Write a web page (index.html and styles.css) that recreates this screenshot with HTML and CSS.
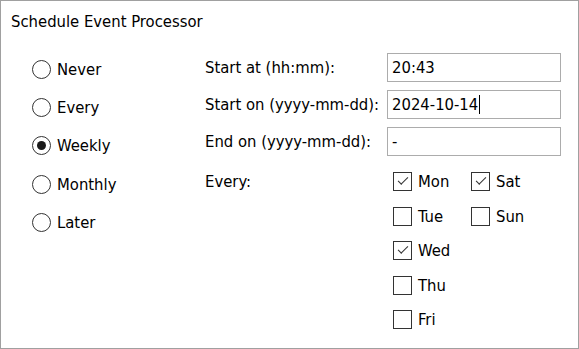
FILE: index.html
```html
<!DOCTYPE html>
<html lang="en">
<head>
  <meta charset="UTF-8">
  <meta name="viewport" content="width=device-width, initial-scale=1.0">
  <title>Schedule Event Processor</title>
  <link rel="stylesheet" href="styles.css">
</head>
<body>

  <div class="window">
    <div class="title">Schedule Event Processor</div>

    <div class="content">
      <!-- Modos de agendamento -->
      <div class="modes">
        <label class="radio"><span class="dot"></span>Never</label>
        <label class="radio"><span class="dot"></span>Every</label>
        <label class="radio selected"><span class="dot"></span>Weekly</label>
        <label class="radio"><span class="dot"></span>Monthly</label>
        <label class="radio"><span class="dot"></span>Later</label>
      </div>

      <!-- Configurações -->
      <div class="settings">
        <div class="label">Start at (hh:mm):</div>
        <div class="field">20:43</div>

        <div class="label">Start on (yyyy-mm-dd):</div>
        <div class="field">2024-10-14<span class="caret"></span></div>

        <div class="label">End on (yyyy-mm-dd):</div>
        <div class="field">-</div>

        <div class="label every">Every:</div>
        <div class="days">
          <label class="check checked"><span class="box"></span>Mon</label>
          <label class="check"><span class="box"></span>Tue</label>
          <label class="check checked"><span class="box"></span>Wed</label>
          <label class="check"><span class="box"></span>Thu</label>
          <label class="check"><span class="box"></span>Fri</label>
          <label class="check checked"><span class="box"></span>Sat</label>
          <label class="check"><span class="box"></span>Sun</label>
        </div>
      </div>
    </div>
  </div>

</body>
</html>
```

FILE: styles.css
```css
/* Estilos gerais */
body {
  margin: 0;
  padding: 0;
  background: #fff;
  font-family: "DejaVu Sans Condensed", "DejaVu Sans", sans-serif;
  font-stretch: condensed;
  font-size: 16.5px;
  color: #000;
}

.window {
  width: 579px;
  height: 349px;
  box-sizing: border-box;
  border: 1px solid #a0a0a0;
  background: #fff;
}

.title {
  padding: 11px 0 18px 10px;
  line-height: 20px;
}

.content {
  display: flex;
  padding-left: 31px;
}

/* Coluna dos radios */
.modes {
  width: 173px;
  display: flex;
  flex-direction: column;
}

.radio {
  height: 38.3px;
  display: flex;
  align-items: center;
  gap: 6px;
}

.dot {
  width: 19px;
  height: 19px;
  box-sizing: border-box;
  border: 1px solid #333;
  border-radius: 50%;
  display: flex;
  align-items: center;
  justify-content: center;
}

.selected .dot::after {
  content: "";
  width: 9px;
  height: 9px;
  border-radius: 50%;
  background: #1a1a1a;
}

/* Grade de configurações */
.settings {
  padding-top: 3px;
  display: grid;
  grid-template-columns: 182px 174px;
  grid-auto-rows: auto;
  row-gap: 8px;
}

.label {
  align-self: center;
  line-height: 20px;
}

.field {
  height: 29px;
  box-sizing: border-box;
  border: 1px solid #acacac;
  padding-left: 4px;
  display: flex;
  align-items: center;
}

.caret {
  width: 1px;
  height: 19px;
  background: #000;
  margin-left: 1px;
}

.every {
  align-self: start;
  margin-top: 8px;
  line-height: 19px;
}

/* Dias da semana */
.days {
  margin-top: 8px;
  padding-left: 6px;
  display: grid;
  grid-template-columns: 78px 78px;
  grid-template-rows: repeat(5, 19px);
  grid-auto-flow: column;
  row-gap: 15.5px;
}

.check {
  display: flex;
  align-items: center;
  gap: 6px;
  line-height: 19px;
}

.box {
  width: 19px;
  height: 19px;
  box-sizing: border-box;
  border: 1px solid #333;
  position: relative;
}

.checked .box::after {
  content: "";
  position: absolute;
  left: 4px;
  top: 4px;
  width: 9px;
  height: 4px;
  border-left: 1.5px solid #333;
  border-bottom: 1.5px solid #333;
  transform: rotate(-45deg);
}
```
